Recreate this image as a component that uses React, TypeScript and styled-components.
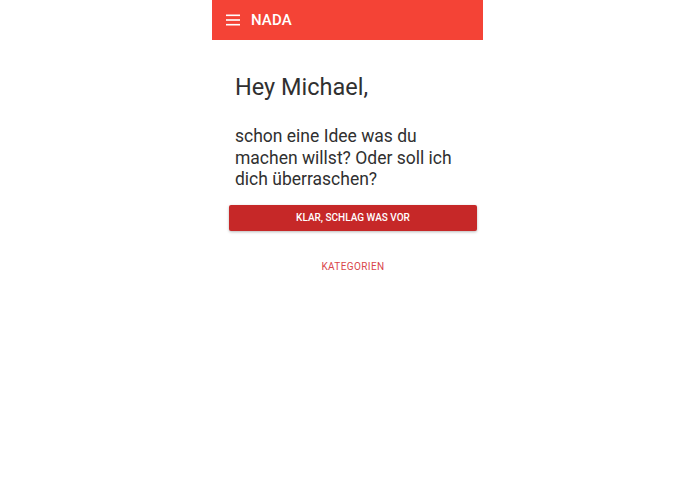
import React, { FC } from 'react';
import styled, { createGlobalStyle } from 'styled-components';

const colors = {
  primary: '#f44336',
  primaryDark: '#c62828',
  accent: '#d9464a',
  text: '#303030',
  white: '#ffffff',
};

const font = `Roboto, 'Noto Sans', Arial, sans-serif`;

const GlobalStyle = createGlobalStyle`
  html, body {
    margin: 0;
    padding: 0;
    background: ${colors.white};
  }
  * {
    box-sizing: border-box;
  }
`;

const Page = styled.div`
  width: 271px;
  margin: 0 auto;
  min-height: 494px;
  font-family: ${font};
`;

const Toolbar = styled.header`
  display: flex;
  align-items: center;
  height: 40px;
  padding-left: 13px;
  background: ${colors.primary};
  color: ${colors.white};
`;

const MenuButton = styled.button`
  display: flex;
  align-items: center;
  justify-content: center;
  width: 16px;
  height: 16px;
  padding: 0;
  border: none;
  background: none;
  color: inherit;
  margin-right: 10px;
`;

const Title = styled.h1`
  margin: 0;
  font-size: 15px;
  font-weight: 500;
  letter-spacing: 0.1px;
`;

const Content = styled.main`
  display: flex;
  flex-direction: column;
  padding: 0 0 0 17px;
`;

const Greeting = styled.h2`
  margin: 33px 0 0 6px;
  font-size: 23.5px;
  font-weight: 400;
  line-height: 1.2;
  color: ${colors.text};
`;

const Question = styled.p`
  margin: 25px 0 0 6px;
  width: 232px;
  font-size: 17.5px;
  font-weight: 400;
  line-height: 21.5px;
  color: ${colors.text};
`;

const RaisedButton = styled.button`
  margin-top: 14px;
  width: 248px;
  height: 26px;
  border: none;
  border-radius: 2px;
  background: ${colors.primaryDark};
  color: ${colors.white};
  font-family: ${font};
  font-size: 10px;
  font-weight: 500;
  text-transform: uppercase;
  box-shadow: 0 1px 3px rgba(0, 0, 0, 0.28);
`;

const FlatButton = styled.button`
  margin-top: 23px;
  width: 248px;
  height: 26px;
  border: none;
  background: none;
  color: ${colors.accent};
  font-family: ${font};
  font-size: 10px;
  font-weight: 400;
  letter-spacing: 0.4px;
  text-transform: uppercase;
`;

const MenuIcon: FC = () => (
  <svg width="14" height="12" viewBox="0 0 14 12" fill="currentColor">
    <rect x="0" y="0.5" width="14" height="1.6" />
    <rect x="0" y="5.2" width="14" height="1.6" />
    <rect x="0" y="9.9" width="14" height="1.6" />
  </svg>
);

const App: FC = () => (
  <>
    <GlobalStyle />
    <Page>
      <Toolbar>
        <MenuButton aria-label="Menü">
          <MenuIcon />
        </MenuButton>
        <Title>NADA</Title>
      </Toolbar>
      <Content>
        <Greeting>Hey Michael,</Greeting>
        <Question>schon eine Idee was du machen willst? Oder soll ich dich überraschen?</Question>
        <RaisedButton>Klar, schlag was vor</RaisedButton>
        <FlatButton>Kategorien</FlatButton>
      </Content>
    </Page>
  </>
);

export default App;
